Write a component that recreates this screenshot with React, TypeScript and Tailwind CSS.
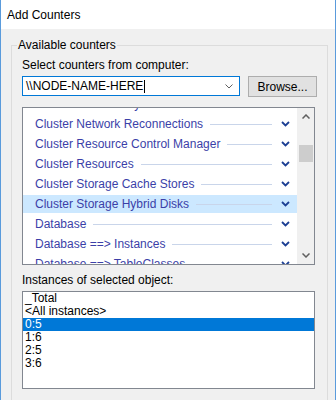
import React from "react";

const ChevDown = ({ className = "" }: { className?: string }) => (
  <svg width="9" height="6" viewBox="0 0 9 6" className={className}>
    <polyline points="1,1 4.5,4.5 8,1" fill="none" stroke="currentColor" strokeWidth="1.8" />
  </svg>
);

const counters = [
  "Cluster Disk Activity",
  "Cluster Network Reconnections",
  "Cluster Resource Control Manager",
  "Cluster Resources",
  "Cluster Storage Cache Stores",
  "Cluster Storage Hybrid Disks",
  "Database",
  "Database ==> Instances",
  "Database ==> TableClasses",
];

const instances = ["_Total", "<All instances>", "0:5", "1:6", "2:5", "3:6"];

export default function App() {
  return (
    <div
      className="w-[336px] h-[400px] overflow-hidden border-x border-[#5a9bdc] bg-[#f0f0f0] text-[12px] text-black"
      style={{ fontFamily: '"Liberation Sans", Arial, sans-serif' }}
    >
      <div className="h-[29px] bg-white flex items-center pl-[6px]">Add Counters</div>
      <div className="pl-[10px] pr-[9px] pt-[8px]">
        <fieldset className="border border-[#dcdcdc] pl-[10px] pr-[10px] pb-[40px]">
          <legend className="-ml-[5px] px-[1px] leading-[16px]">Available counters</legend>
          <div className="leading-[16px] mt-[4px]">Select counters from computer:</div>
          <div className="flex items-start gap-[8px] mt-[3px]">
            <div className="w-[218px] h-[20px] border border-[#0078d7] bg-white flex items-center pl-[3px] pr-[6px]">
              <span className="leading-[16px]">{"\\\\NODE-NAME-HERE"}</span>
              <span className="w-[1px] h-[13px] bg-black ml-[1px]" />
              <span className="ml-auto text-[#606060]">
                <svg width="8" height="5" viewBox="0 0 8 5">
                  <polyline points="0.5,0.5 4,4 7.5,0.5" fill="none" stroke="currentColor" strokeWidth="1" />
                </svg>
              </span>
            </div>
            <button className="w-[69px] h-[21px] border border-[#adadad] bg-[#e1e1e1] flex items-center justify-center leading-[16px]">
              Browse...
            </button>
          </div>
          <div className="mt-[10px] w-[293px] h-[158px] border border-[#828790] bg-white flex overflow-hidden">
            <div className="flex-1 overflow-hidden">
              <div className="-mt-[14px]">
                {counters.map((c) => {
                  const sel = c === "Cluster Storage Hybrid Disks";
                  return (
                    <div key={c} className="h-[20px] py-[1px]">
                      <div
                        className={`h-[18px] flex items-center pl-[12px] pr-[7px] text-[#3b3fa8] ${
                          sel ? "bg-[#cce8ff]" : ""
                        }`}
                      >
                        <span className="whitespace-nowrap leading-[16px]">{c}</span>
                        <span className="flex-1 h-[1px] bg-[#c9d5ea] ml-[7px] mr-[9px]" />
                        <ChevDown className="text-[#1c3f94]" />
                      </div>
                    </div>
                  );
                })}
              </div>
            </div>
            <div className="w-[17px] bg-[#f0f0f0] flex flex-col items-center">
              <div className="h-[17px] flex items-center justify-center text-[#606060]">
                <svg width="8" height="5" viewBox="0 0 8 5">
                  <polyline points="0.5,4.5 4,1 7.5,4.5" fill="none" stroke="currentColor" strokeWidth="1.5" />
                </svg>
              </div>
              <div className="mt-[20px] w-[14px] h-[17px] bg-[#cdcdcd]" />
              <div className="flex-1" />
              <div className="h-[17px] flex items-center justify-center text-[#606060]">
                <svg width="8" height="5" viewBox="0 0 8 5">
                  <polyline points="0.5,0.5 4,4 7.5,0.5" fill="none" stroke="currentColor" strokeWidth="1.5" />
                </svg>
              </div>
            </div>
          </div>
          <div className="mt-[7px] leading-[16px]">Instances of selected object:</div>
          <div className="mt-[3px] w-[293px] h-[98px] border border-[#828790] bg-white">
            {instances.map((i) => (
              <div
                key={i}
                className={`h-[13px] leading-[13px] pl-[2px] ${i === "0:5" ? "bg-[#0078d7] text-white" : ""}`}
              >
                {i}
              </div>
            ))}
          </div>
        </fieldset>
      </div>
    </div>
  );
}
